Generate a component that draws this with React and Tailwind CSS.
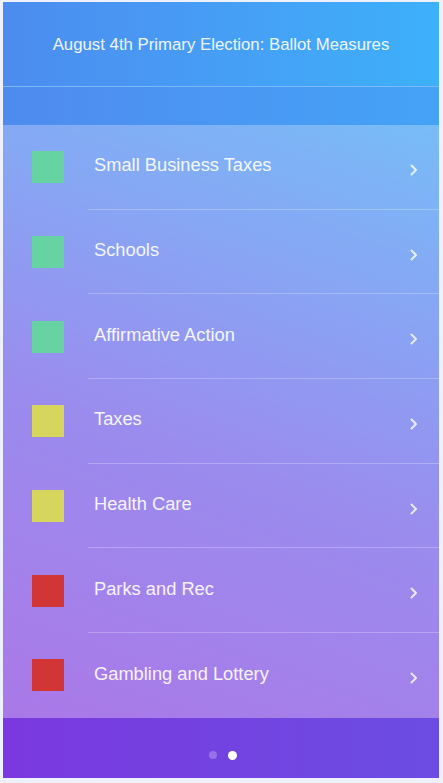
import React from "react";

const items = [
  { name: "Small Business Taxes", color: "bg-[#67d3a3]" },
  { name: "Schools", color: "bg-[#67d3a3]" },
  { name: "Affirmative Action", color: "bg-[#67d3a3]" },
  { name: "Taxes", color: "bg-[#d6d65e]" },
  { name: "Health Care", color: "bg-[#d6d65e]" },
  { name: "Parks and Rec", color: "bg-[#d13535]" },
  { name: "Gambling and Lottery", color: "bg-[#d13535]" },
];

function Chevron() {
  return (
    <svg width="10" height="14" viewBox="0 0 10 14" fill="none" className="opacity-80 mt-[6px]">
      <path d="M2.5 2.5 L7 7 L2.5 11.5" stroke="white" strokeWidth="2" strokeLinecap="round" strokeLinejoin="round" />
    </svg>
  );
}

export default function App() {
  return (
    <div className="w-[443px] h-[783px] bg-[#eef0fb] pl-[3px] pr-[4px] pt-[2px] pb-[5px] font-['Liberation_Sans',Arial,sans-serif]">
      <div className="h-full flex flex-col overflow-hidden">
        <div className="h-[85px] flex items-center justify-center bg-gradient-to-r from-[#4c8cef] to-[#3db0fa] border-b border-[#7ab8f6]">
          <span className="text-white/90 text-[16.8px] pt-[1px]">
            August 4th Primary Election: Ballot Measures
          </span>
        </div>
        <div className="h-[38px] bg-gradient-to-r from-[#4f8bef] to-[#44a3f6]" />
        <div className="flex-1 flex flex-col bg-[linear-gradient(20deg,#aa78e8_0%,#9a8cee_45%,#77bcf8_100%)]">
          {items.map((it, i) => (
            <div key={it.name} className="h-[84.7px] flex items-stretch">
              <div className="w-[85px] flex items-center pl-[29px]">
                <div className={`w-[32px] h-[32px] ${it.color}`} />
              </div>
              <div
                className={`flex-1 flex items-center pr-[20px] ${
                  i < items.length - 1 ? "border-b border-white/25" : ""
                }`}
              >
                <span className="flex-1 text-white/90 text-[18.3px] pl-[6px] -mt-[4px]">{it.name}</span>
                <Chevron />
              </div>
            </div>
          ))}
        </div>
        <div className="h-[60px] flex items-center justify-center gap-[11px] pt-[14px] pl-[3px] bg-gradient-to-r from-[#7a38df] to-[#6b4ce2]">
          <div className="w-[8px] h-[8px] rounded-full bg-white/25" />
          <div className="w-[9px] h-[9px] rounded-full bg-white" />
        </div>
      </div>
    </div>
  );
}
